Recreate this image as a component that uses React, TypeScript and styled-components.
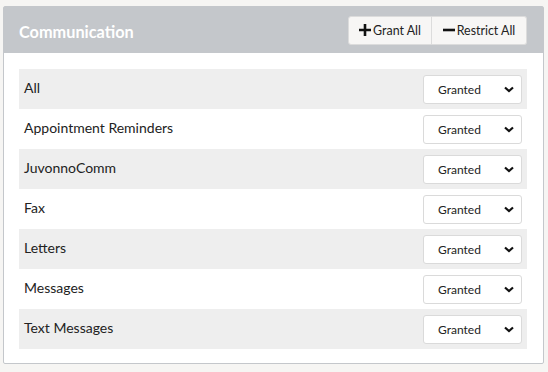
import { createGlobalStyle, styled } from 'styled-components'

const GlobalStyle = createGlobalStyle`
  body {
    margin: 0;
    background: #f6f5f3;
    font-family: Lato, "Open Sans", sans-serif;
    color: #222;
  }
`

const Page = styled.div`
  padding: 6px 4px 0 3px;
`

const Card = styled.section`
  background: #fff;
  border: 1px solid #c4c7cb;
  border-radius: 2px;
`

const Header = styled.header`
  display: flex;
  align-items: center;
  justify-content: space-between;
  height: 46px;
  padding: 0 16px 0 15px;
  background: #c4c7cb;
`

const Title = styled.h2`
  margin: 2px 0 0;
  color: #fff;
  font-size: 16.3px;
  font-weight: 700;
`

const ButtonGroup = styled.div`
  display: flex;
`

const HeaderButton = styled.button<{ $width: number; $first?: boolean }>`
  display: flex;
  align-items: center;
  justify-content: center;
  gap: 2px;
  width: ${({ $width }) => $width}px;
  height: 29px;
  padding: 0;
  background: #f7f6f5;
  border: 1px solid #dcdcdc;
  border-left-width: ${({ $first }) => ($first ? '1px' : '0')};
  border-radius: ${({ $first }) => ($first ? '3px 0 0 3px' : '0 3px 3px 0')};
  font-family: Lato, sans-serif;
  font-size: 12.4px;
  color: #222;
`

const List = styled.div`
  display: flex;
  flex-direction: column;
  padding: 16px 16px 14px 15px;
`

const Row = styled.div<{ $shaded: boolean }>`
  display: flex;
  align-items: center;
  justify-content: space-between;
  height: 40px;
  padding: 0 5px;
  background: ${({ $shaded }) => ($shaded ? '#eeeeee' : '#fff')};
`

const Label = styled.span`
  font-size: 14px;
  margin-top: -3px;
`

const Select = styled.div`
  display: flex;
  align-items: center;
  justify-content: space-between;
  box-sizing: border-box;
  width: 99px;
  height: 29px;
  padding: 0 7px 0 14px;
  margin-top: 1px;
  background: #fff;
  border: 1px solid #dadada;
  border-radius: 3px;
  font-size: 12px;
`

const Plus = () => (
  <svg width="12" height="12" viewBox="0 0 12 12">
    <path d="M6 0v12M0 6h12" stroke="#111" strokeWidth="2.6" />
  </svg>
)

const Minus = () => (
  <svg width="12" height="12" viewBox="0 0 12 12">
    <path d="M0 6h12" stroke="#111" strokeWidth="2.6" />
  </svg>
)

const Chevron = () => (
  <svg width="10" height="7" viewBox="0 0 10 7">
    <path d="M1 1.5l4 3.5 4-3.5" fill="none" stroke="#111" strokeWidth="2.2" />
  </svg>
)

const items = [
  'All',
  'Appointment Reminders',
  'JuvonnoComm',
  'Fax',
  'Letters',
  'Messages',
  'Text Messages',
]

const App = () => (
  <>
    <GlobalStyle />
    <Page>
      <Card>
        <Header>
          <Title>Communication</Title>
          <ButtonGroup>
            <HeaderButton $width={84} $first>
              <Plus />
              Grant All
            </HeaderButton>
            <HeaderButton $width={95}>
              <Minus />
              Restrict All
            </HeaderButton>
          </ButtonGroup>
        </Header>
        <List>
          {items.map((item, i) => (
            <Row key={item} $shaded={i % 2 === 0}>
              <Label>{item}</Label>
              <Select>
                <span>Granted</span>
                <Chevron />
              </Select>
            </Row>
          ))}
        </List>
      </Card>
    </Page>
  </>
)

export default App
